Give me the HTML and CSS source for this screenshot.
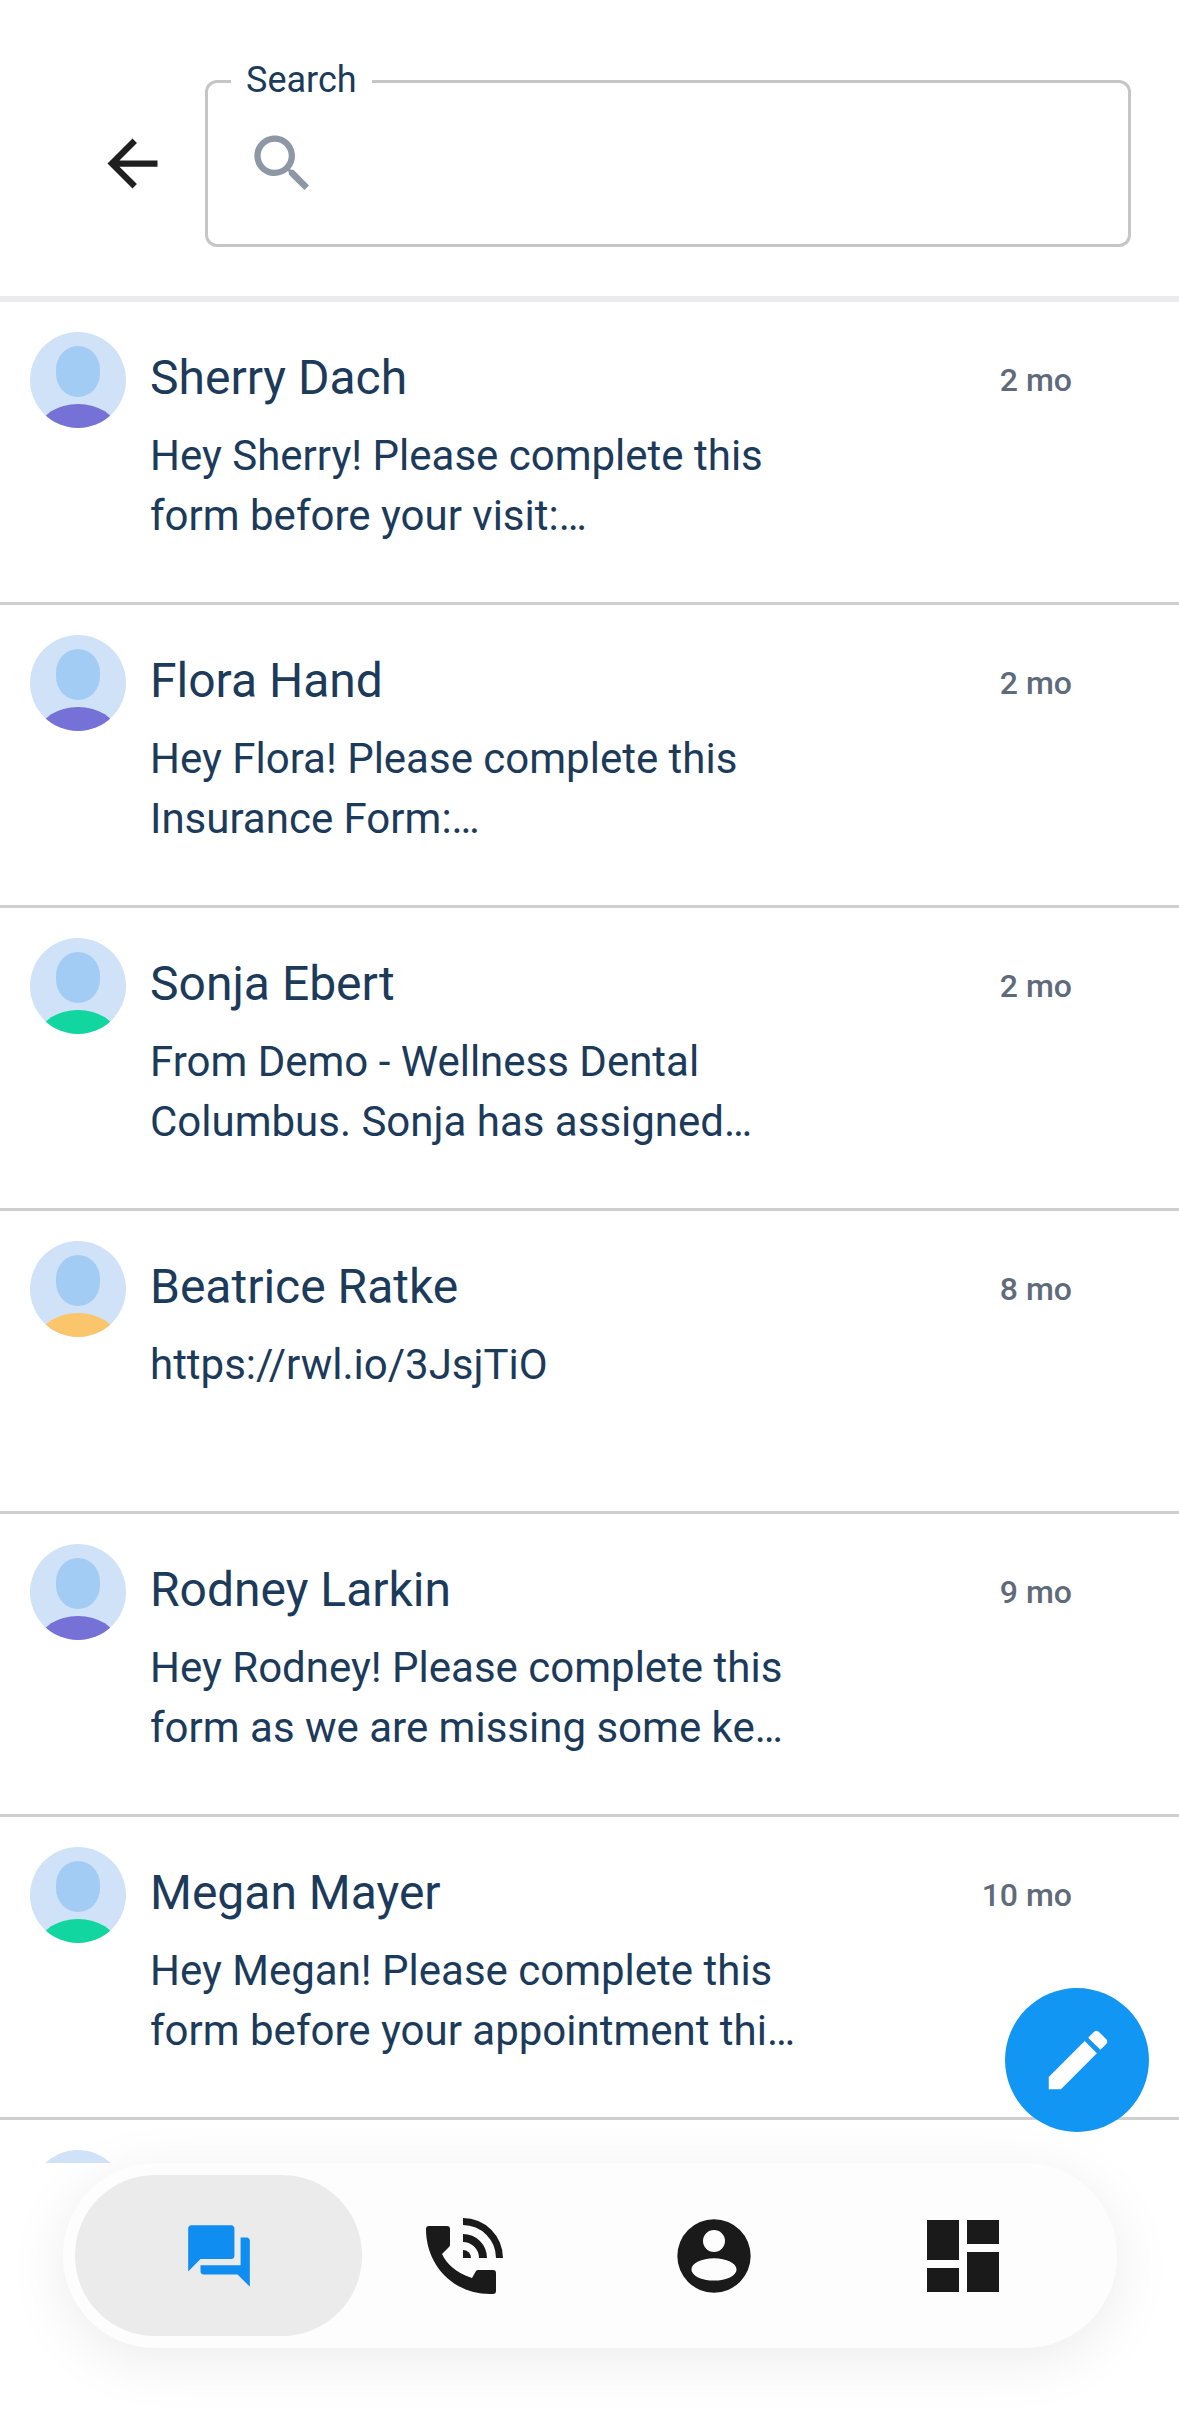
FILE: index.html
```html
<!DOCTYPE html>
<html lang="en">
<head>
  <meta charset="UTF-8">
  <meta name="viewport" content="width=device-width, initial-scale=1.0">
  <title>Search conversations</title>
  <link rel="stylesheet" href="styles.css">
</head>
<body>
  <div class="screen">
    <!-- Search header -->
    <header class="header">
      <div class="back">
        <svg class="icon-back" viewBox="0 0 24 24"><path d="M20 11H7.830l5.590-5.590L12 4l-8 8 8 8 1.410-1.410L7.830 13H20v-2z"/></svg>
      </div>
      <div class="search">
        <span class="search-label">Search</span>
        <svg class="icon-search" viewBox="0 0 24 24"><path d="M15.5 14h-.79l-.28-.27C15.41 12.59 16 11.11 16 9.5 16 5.91 13.09 3 9.5 3S3 5.91 3 9.5 5.91 16 9.5 16c1.61 0 3.09-.59 4.23-1.57l.27.28v.79l5 4.99L20.49 19l-4.99-5zm-6 0C7.01 14 5 11.99 5 9.5S7.01 5 9.5 5 14 7.01 14 9.5 11.99 14 9.5 14z"/></svg>
      </div>
    </header>

    <!-- Conversations -->
    <ul class="list">
      <li class="row">
        <div class="avatar"><span class="avatar-head"></span><span class="avatar-body purple"></span></div>
        <div class="row-main">
          <div class="row-top"><span class="name">Sherry Dach</span><span class="time">2 mo</span></div>
          <p class="preview">Hey Sherry! Please complete this<br>form before your visit:…</p>
        </div>
      </li>
      <li class="row">
        <div class="avatar"><span class="avatar-head"></span><span class="avatar-body purple"></span></div>
        <div class="row-main">
          <div class="row-top"><span class="name">Flora Hand</span><span class="time">2 mo</span></div>
          <p class="preview">Hey Flora! Please complete this<br>Insurance Form:…</p>
        </div>
      </li>
      <li class="row">
        <div class="avatar"><span class="avatar-head"></span><span class="avatar-body green"></span></div>
        <div class="row-main">
          <div class="row-top"><span class="name">Sonja Ebert</span><span class="time">2 mo</span></div>
          <p class="preview">From Demo - Wellness Dental<br>Columbus. Sonja has assigned…</p>
        </div>
      </li>
      <li class="row">
        <div class="avatar"><span class="avatar-head"></span><span class="avatar-body orange"></span></div>
        <div class="row-main">
          <div class="row-top"><span class="name">Beatrice Ratke</span><span class="time">8 mo</span></div>
          <p class="preview">https://rwl.io/3JsjTiO</p>
        </div>
      </li>
      <li class="row">
        <div class="avatar"><span class="avatar-head"></span><span class="avatar-body purple"></span></div>
        <div class="row-main">
          <div class="row-top"><span class="name">Rodney Larkin</span><span class="time">9 mo</span></div>
          <p class="preview">Hey Rodney! Please complete this<br>form as we are missing some ke…</p>
        </div>
      </li>
      <li class="row">
        <div class="avatar"><span class="avatar-head"></span><span class="avatar-body green"></span></div>
        <div class="row-main">
          <div class="row-top"><span class="name">Megan Mayer</span><span class="time">10 mo</span></div>
          <p class="preview">Hey Megan! Please complete this<br>form before your appointment thi…</p>
        </div>
      </li>
      <li class="row">
        <div class="avatar"><span class="avatar-head"></span><span class="avatar-body purple"></span></div>
      </li>
    </ul>

    <!-- Bottom navigation -->
    <nav class="nav">
      <div class="nav-item active">
        <svg class="icon-forum" viewBox="0 0 24 24"><path d="M21 6h-2v9H6v2c0 .55.45 1 1 1h11l4 4V7c0-.55-.45-1-1-1zm-4 6V3c0-.55-.45-1-1-1H3c-.55 0-1 .45-1 1v14l4-4h10c.55 0 1-.45 1-1z"/></svg>
      </div>
      <div class="nav-item">
        <svg class="icon-call" viewBox="0 0 80 78"><path d="M4 9H22a3 3 0 0 1 3 3V28a3 3 0 0 1-1 2L17 37C22 47 30 55 47 61L51 54a3 3 0 0 1 2-1H68a3 3 0 0 1 3 3V74a3 3 0 0 1-3 3H65C29 77 1 49 1 12a3 3 0 0 1 3-3Z"/><path d="M38 1A40 40 0 0 1 78 41H71A33 33 0 0 0 38 8Z"/><path d="M38 17A24 24 0 0 1 62 41H54A16 16 0 0 0 38 25Z"/><path d="M38 33A8 8 0 0 1 46 41H38Z"/></svg>
      </div>
      <div class="nav-item">
        <svg class="icon-person" viewBox="0 0 24 24"><path fill-rule="evenodd" d="M12 2a10 10 0 1 0 0 20a10 10 0 1 0 0-20zM12 4.900a3 3 0 1 1 0 6a3 3 0 1 1 0-6zM12 12.600c3.400 0 6.150 1.370 6.150 3.050S15.400 18.700 12 18.700s-6.150-1.370-6.150-3.050S8.600 12.600 12 12.600z"/></svg>
      </div>
      <div class="nav-item">
        <svg class="icon-dash" viewBox="0 0 24 24"><path d="M3 13h8V3H3v10zm0 8h8v-6H3v6zm10 0h8V11h-8v10zm0-18v6h8V3h-8z"/></svg>
      </div>
    </nav>

    <!-- New message button -->
    <button class="fab">
      <svg class="icon-pencil" viewBox="0 0 24 24"><path d="M3 17.25V21h3.75L17.81 9.94l-3.75-3.75L3 17.25zM20.71 7.04c.39-.39.39-1.02 0-1.41l-2.34-2.34c-.39-.39-1.02-.39-1.41 0l-1.83 1.83 3.75 3.75 1.83-1.83z"/></svg>
    </button>
  </div>
</body>
</html>
```

FILE: styles.css
```css
body {
  margin: 0;
  background-color: #fff;
  font-family: Roboto, Arial, sans-serif;
  color: #1c3a5a;
}
svg {
  display: block;
  fill: currentColor;
}
.screen {
  position: relative;
  width: 1179px;
  height: 2411px;
  overflow: hidden;
}

/* Header */
.header {
  display: flex;
  height: 302px;
  box-sizing: border-box;
  padding: 80px 48px 0 0;
  border-bottom: 6px solid #ebebed;
}
.back {
  flex: none;
  width: 205px;
  box-sizing: border-box;
  padding: 46px 0 0 95px;
}
.icon-back {
  width: 75px;
  height: 75px;
  color: #1f1f1f;
}
.search {
  position: relative;
  flex: 1;
  height: 167px;
  box-sizing: border-box;
  border: 3px solid #c6c6c6;
  border-radius: 12px;
  display: flex;
  align-items: center;
  padding-left: 37px;
}
.search-label {
  position: absolute;
  left: 23px;
  top: -25px;
  padding: 0 15px;
  background-color: #fff;
  font-size: 36px;
  line-height: 44px;
}
.icon-search {
  width: 75px;
  height: 75px;
  color: #8d97a5;
}

/* List */
.list {
  list-style: none;
  margin: 0;
  padding: 0;
  height: 1861px;
  overflow: hidden;
}
.row {
  display: flex;
  gap: 24px;
  height: 303px;
  box-sizing: border-box;
  padding: 30px 107px 0 30px;
  border-bottom: 3px solid #cfcfcf;
}
.avatar {
  position: relative;
  flex: none;
  width: 96px;
  height: 96px;
  border-radius: 50%;
  overflow: hidden;
  background-color: #cfe2f7;
}
.avatar-head {
  position: absolute;
  left: 26px;
  top: 14px;
  width: 44px;
  height: 51px;
  border-radius: 50% / 46%;
  background-color: #a3ccf5;
}
.avatar-body {
  position: absolute;
  left: 10px;
  top: 72px;
  width: 76px;
  height: 50px;
  border-radius: 50%;
}
.purple { background-color: #7571d6; }
.green { background-color: #12d6a0; }
.orange { background-color: #fbc56c; }
.row-main {
  flex: 1;
  padding-top: 16px;
}
.row-top {
  display: flex;
  justify-content: space-between;
  align-items: center;
}
.name {
  font-size: 48px;
  line-height: 60px;
}
.time {
  font-size: 32px;
  font-weight: 500;
  color: #5f6b7a;
  padding-top: 3px;
}
.preview {
  margin: 18px 0 0;
  font-size: 42px;
  line-height: 60px;
}

/* Compose button */
.fab {
  position: absolute;
  left: 1005px;
  top: 1988px;
  width: 144px;
  height: 144px;
  padding: 0 0 0 2px;
  border: none;
  border-radius: 50%;
  background-color: #1296f3;
  color: #fff;
  display: flex;
  align-items: center;
  justify-content: center;
}
.icon-pencil {
  width: 78px;
  height: 78px;
}

/* Bottom navigation */
.nav {
  display: flex;
  align-items: center;
  margin-left: 63px;
  width: 1054px;
  height: 185px;
  padding: 0 12px;
  box-sizing: border-box;
  border-radius: 92px;
  background-color: #fdfdfd;
  box-shadow: 0 12px 60px rgba(0, 0, 0, 0.08);
}
.nav-item {
  display: flex;
  align-items: center;
  justify-content: center;
  width: 249px;
  height: 161px;
  color: #1a1a1a;
}
.nav-item.active {
  width: 287px;
  margin-right: -22px;
  border-radius: 80px;
  background-color: #ebebeb;
  color: #0f8df0;
}
.icon-forum {
  width: 74px;
  height: 74px;
}
.icon-call {
  width: 80px;
  height: 78px;
}
.icon-person {
  width: 88px;
  height: 88px;
}
.icon-dash {
  width: 96px;
  height: 96px;
}
```
